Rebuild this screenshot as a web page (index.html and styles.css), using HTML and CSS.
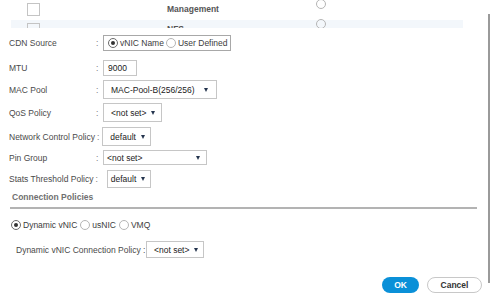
FILE: index.html
```html
<!DOCTYPE html>
<html lang="en">
<head>
    <meta charset="UTF-8">
    <meta name="viewport" content="width=device-width, initial-scale=1.0">
    <title>vNIC Properties</title>
    <link rel="stylesheet" href="styles.css">
</head>
<body>
    <div class="list">
        <div class="list-row">
            <span class="checkbox"></span>
            <span class="list-name">Management</span>
            <span class="radio"></span>
        </div>
        <div class="list-row selected">
            <span class="checkbox"></span>
            <span class="list-name">NFS</span>
            <span class="radio"></span>
        </div>
    </div>
    <div class="scroll-thumb"></div>

    <form class="form">
        <div class="row row-cdn">
            <label>CDN Source</label>
            <span class="colon">:</span>
            <div class="radio-box">
                <span class="radio checked"></span><span class="opt">vNIC Name</span>
                <span class="radio"></span><span class="opt">User Defined</span>
            </div>
        </div>
        <div class="row">
            <label>MTU</label>
            <span class="colon">:</span>
            <div class="input mtu">9000</div>
        </div>
        <div class="row">
            <label>MAC Pool</label>
            <span class="colon">:</span>
            <div class="select mac">MAC-Pool-B(256/256)<i class="caret"></i></div>
        </div>
        <div class="row row-wide">
            <label>QoS Policy</label>
            <span class="colon">:</span>
            <div class="select qos">&lt;not set&gt;<i class="caret"></i></div>
        </div>
        <div class="row row-long">
            <label>Network Control Policy</label>
            <span class="colon">:</span>
            <div class="select ncp">default<i class="caret"></i></div>
        </div>
        <div class="row row-wide">
            <label>Pin Group</label>
            <span class="colon">:</span>
            <div class="select pin">&lt;not set&gt;<i class="caret"></i></div>
        </div>
        <div class="row row-long">
            <label>Stats Threshold Policy</label>
            <span class="colon">:</span>
            <div class="select stats">default<i class="caret"></i></div>
        </div>

        <div class="section">Connection Policies</div>

        <div class="conn-radios">
            <span class="radio checked"></span><span class="opt">Dynamic vNIC</span>
            <span class="radio"></span><span class="opt">usNIC</span>
            <span class="radio"></span><span class="opt">VMQ</span>
        </div>

        <div class="dyn-row">
            <label>Dynamic vNIC Connection Policy :</label>
            <div class="select dyn">&lt;not set&gt;<i class="caret"></i></div>
        </div>

        <div class="actions">
            <button type="button" class="btn ok">OK</button>
            <button type="button" class="btn cancel">Cancel</button>
        </div>
    </form>
</body>
</html>
```

FILE: styles.css
```css
body {
    margin: 0;
    background-color: #ffffff;
    font-family: "Liberation Sans", Arial, sans-serif;
    font-size: 8.5px;
    color: #3c3c3c;
    width: 497px;
    height: 303px;
    overflow: hidden;
}

/* clipped list at the top */
.list {
    height: 28px;
    overflow: hidden;
    margin: 0 34px 0 11px;
}

.list-row {
    height: 20px;
    display: flex;
    align-items: flex-start;
}

.list-row.selected {
    background-color: #f3f7fb;
}

.checkbox {
    width: 11px;
    height: 11px;
    border: 1px solid #c4c4c4;
    margin: 3px 0 0 16px;
    flex-shrink: 0;
}

.list-name {
    margin: 4px 0 0 127px;
    width: 149px;
    color: #555555;
    font-weight: bold;
}

.list-row .radio {
    margin-top: -1px;
}

.scroll-thumb {
    position: absolute;
    left: 488px;
    top: 14px;
    width: 2px;
    height: 269px;
    background-color: #9a9a9a;
}

/* form */
.form {
    padding: 7px 15px 0 9px;
}

.row {
    display: grid;
    grid-template-columns: 87px 7px auto;
    align-items: center;
    margin-bottom: 4px;
}

.row-cdn {
    margin-bottom: 9px;
}

.row-wide {
    margin-bottom: 5px;
}

.row-long {
    grid-template-columns: max-content auto auto;
    justify-content: start;
}

.row-long .colon {
    margin: 0 3px 0 2px;
}

label {
    color: #4a4a4a;
    white-space: nowrap;
}

.colon {
    color: #777777;
}

.radio {
    display: inline-block;
    width: 8px;
    height: 8px;
    border: 1px solid #b5b5b5;
    border-radius: 50%;
    position: relative;
    flex-shrink: 0;
}

.radio.checked {
    border-color: #6a6a6a;
}

.radio.checked::after {
    content: "";
    position: absolute;
    left: 2px;
    top: 2px;
    width: 4px;
    height: 4px;
    border-radius: 50%;
    background-color: #333333;
}

.opt {
    margin: 0 2px 0 2px;
    color: #3c3c3c;
    white-space: nowrap;
}

.conn-radios .opt {
    margin-right: 3px;
}

.radio-box {
    width: 128px;
    height: 16px;
    box-sizing: border-box;
    border: 1px solid #a8a8a8;
    display: flex;
    align-items: center;
    padding-left: 4px;
}

.input {
    height: 16px;
    box-sizing: border-box;
    border: 1px solid #c6c6c6;
    display: flex;
    align-items: center;
    padding-left: 4px;
    color: #222222;
}

.mtu {
    width: 34px;
}

.select {
    height: 19px;
    box-sizing: border-box;
    border: 1px solid #c6c6c6;
    display: flex;
    align-items: center;
    gap: 5px;
    padding-left: 7px;
    color: #222222;
    white-space: nowrap;
    background-color: #ffffff;
}

.caret {
    width: 0;
    height: 0;
    border-left: 2.5px solid transparent;
    border-right: 2.5px solid transparent;
    border-top: 4px solid #24344e;
    margin-left: auto;
    margin-right: 8px;
    flex-shrink: 0;
}

.mac {
    width: 114px;
}

.qos {
    width: 59px;
}

.ncp {
    width: 49px;
}

.pin {
    width: 104px;
    height: 15px;
    padding-left: 3px;
}

.pin .caret {
    margin-right: 6px;
}

.stats {
    width: 44px;
    height: 18px;
    margin-left: 6px;
    padding-left: 3px;
}

.stats .caret {
    margin-right: 7px;
}

.section {
    margin: 1px 5px 0 1px;
    padding: 0 0 5px 2px;
    font-weight: bold;
    color: #707070;
    border-bottom: 2px solid #b3b3b3;
}

.conn-radios {
    display: flex;
    align-items: center;
    margin-top: 11px;
    padding-left: 2px;
}

.dyn-row {
    display: flex;
    align-items: center;
    margin-top: 11px;
    padding-left: 7px;
}

.dyn-row label {
    width: 130px;
}

.dyn {
    width: 58px;
    height: 17px;
}

.actions {
    display: flex;
    justify-content: flex-end;
    margin-top: 19px;
}

.btn {
    height: 16px;
    border-radius: 9px;
    font-family: "Liberation Sans", Arial, sans-serif;
    font-size: 8.5px;
    font-weight: bold;
    padding: 0;
    cursor: pointer;
}

.ok {
    width: 37px;
    border: none;
    background-color: #0a90d8;
    color: #ffffff;
}

.cancel {
    width: 55px;
    margin-left: 8px;
    border: 1px solid #c8c8c8;
    background-color: #ffffff;
    color: #333333;
}
```
